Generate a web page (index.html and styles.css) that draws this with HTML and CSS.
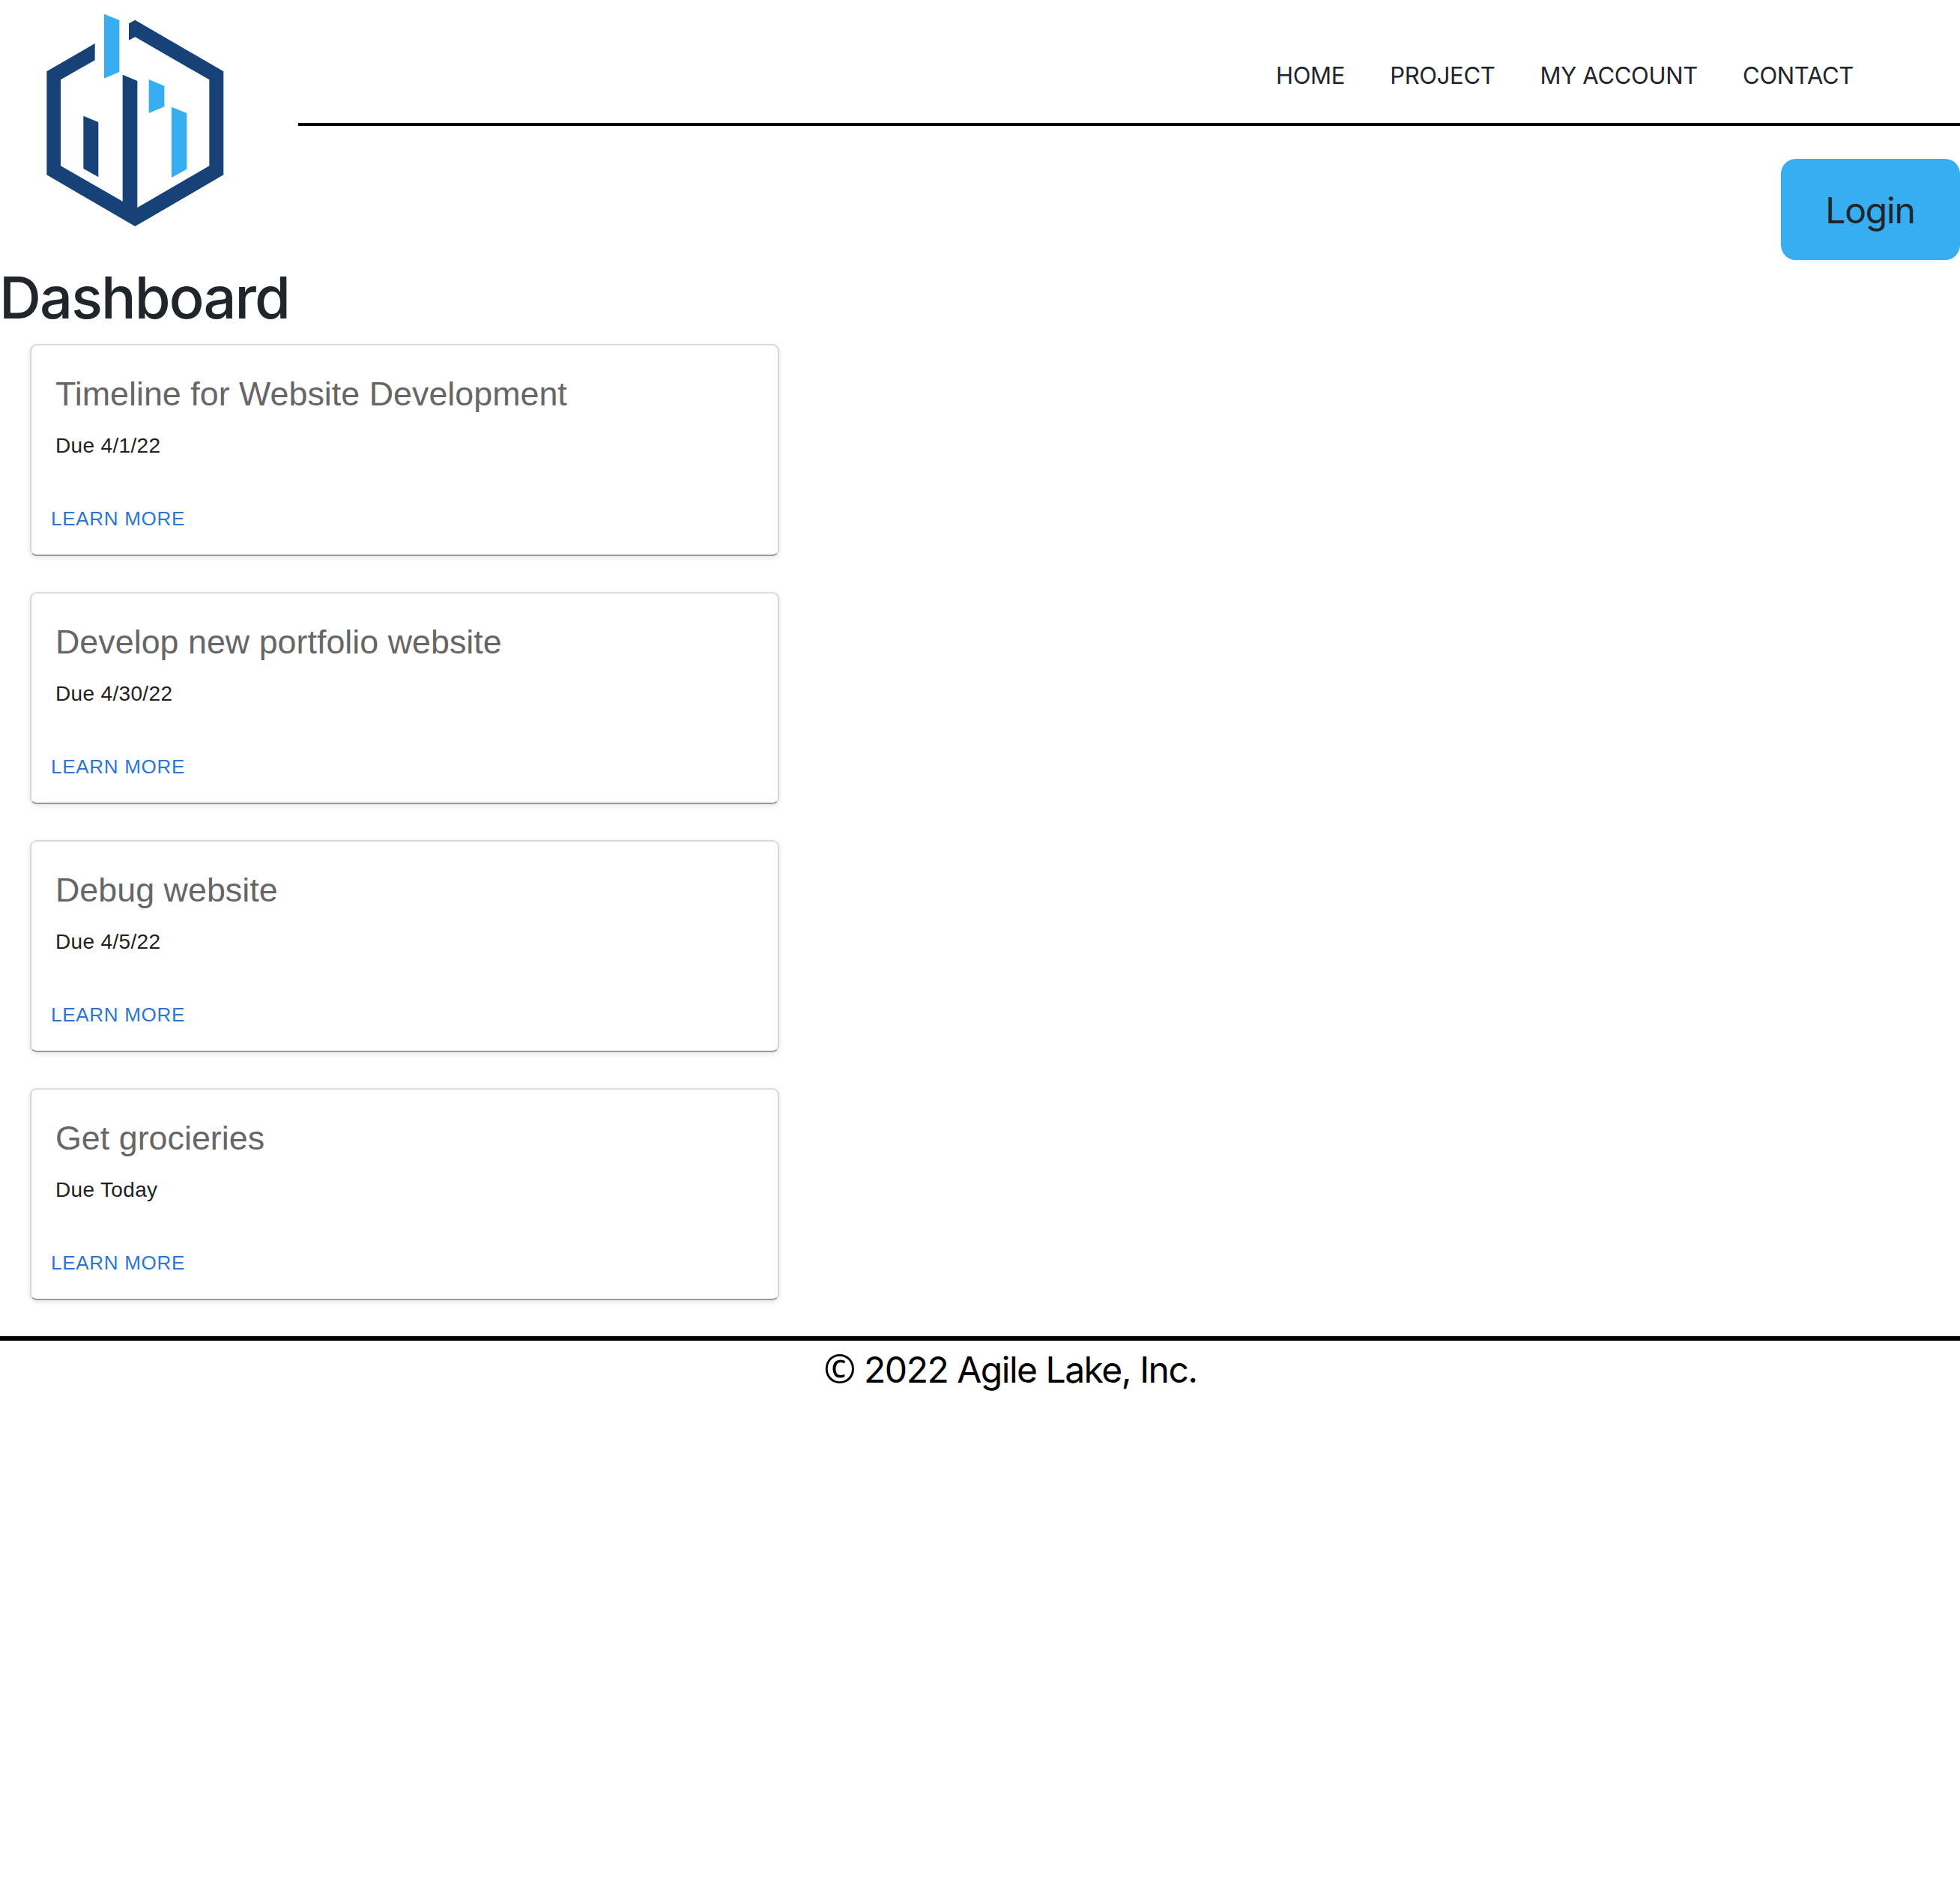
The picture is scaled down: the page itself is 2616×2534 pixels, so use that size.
FILE: index.html
```html
<!DOCTYPE html>
<html lang="en">
<head>
  <meta charset="utf-8">
  <title>Dashboard - Agile Lake</title>
  <link rel="stylesheet" href="styles.css">
</head>
<body>
  <header class="header">
    <a class="logo" aria-label="Agile Lake">
      <svg class="logo-mark" viewBox="0 0 1194 1020">
        <g fill="#164278">
          <path d="M380 174V241L243 319V664L491 806V299L550 324V831L838 664V319L541 148L516 161V94L541 80L895 286V700L541 906L187 700V286Z"/>
          <path d="M334 464L394 489V709L334 675Z"/>
        </g>
        <g fill="#36aef1">
          <path d="M417 56L478 81V288L417 314Z"/>
          <path d="M596 318L658 344V427L596 453Z"/>
          <path d="M687 428L748 453V677L687 711Z"/>
        </g>
      </svg>
    </a>
    <div class="header-main">
      <nav class="nav">
        <a class="nav-link">HOME</a>
        <a class="nav-link">PROJECT</a>
        <a class="nav-link">MY ACCOUNT</a>
        <a class="nav-link">CONTACT</a>
      </nav>
      <button class="login">Login</button>
    </div>
  </header>

  <main>
    <h1 class="page-title">Dashboard</h1>
    <div class="cards">
      <section class="card">
        <h2 class="card-title">Timeline for Website Development</h2>
        <p class="card-due">Due 4/1/22</p>
        <a class="card-link">LEARN MORE</a>
      </section>
      <section class="card">
        <h2 class="card-title">Develop new portfolio website</h2>
        <p class="card-due">Due 4/30/22</p>
        <a class="card-link">LEARN MORE</a>
      </section>
      <section class="card">
        <h2 class="card-title">Debug website</h2>
        <p class="card-due">Due 4/5/22</p>
        <a class="card-link">LEARN MORE</a>
      </section>
      <section class="card">
        <h2 class="card-title">Get grocieries</h2>
        <p class="card-due">Due Today</p>
        <a class="card-link">LEARN MORE</a>
      </section>
    </div>
  </main>

  <footer class="footer"><span class="copyright">©</span> 2022 Agile Lake, Inc.</footer>
</body>
</html>
```
FILE: styles.css
```css
* {
  box-sizing: border-box;
}

body {
  margin: 0;
  background: #fff;
  color: #212529;
  font-family: Inter, sans-serif;
}

.header {
  display: flex;
  height: 347px;
}

.logo {
  flex: 0 0 398px;
}

.logo-mark {
  display: block;
  width: 398px;
  height: 340px;
}

.header-main {
  flex: 1;
  display: flex;
  flex-direction: column;
  align-items: flex-end;
}

.nav {
  display: flex;
  align-items: center;
  justify-content: flex-end;
  gap: 60px;
  width: 100%;
  height: 168px;
  padding: 37px 142px 0 0;
  border-bottom: 4px solid #000;
}

.nav-link {
  font-size: 31px;
  line-height: 48px;
  letter-spacing: -0.3px;
}

.login {
  width: 239px;
  height: 135px;
  margin-top: 44px;
  padding: 2px 1px 0 0;
  border: 0;
  border-radius: 20px;
  background: #36aef1;
  color: #212529;
  font: 48px Inter, sans-serif;
  letter-spacing: -1.2px;
}

.page-title {
  margin: 2px 0 14px -1px;
  font-size: 77.5px;
  font-weight: 500;
  line-height: 96px;
  letter-spacing: -1.9px;
}

.cards {
  display: flex;
  flex-direction: column;
  gap: 48px;
  width: 1000px;
  margin: 0 0 48px 40px;
  font-family: "Liberation Sans", sans-serif;
}

.card {
  height: 283px;
  padding: 32px 32px 0;
  border: 2px solid #d6d6d6;
  border-top-color: #dcdcdc;
  border-bottom-color: #999;
  border-radius: 9px;
  box-shadow: 0 2px 6px rgba(0, 0, 0, 0.12);
}

.card-title {
  margin: 0;
  color: #666;
  font-size: 44.8px;
  font-weight: 400;
  line-height: 64px;
  letter-spacing: 0.02px;
}

.card-due {
  margin: 18px 0 55px;
  color: #212121;
  font-size: 28px;
  line-height: 40px;
  letter-spacing: 0.34px;
}

.card-link {
  display: block;
  margin-left: -6px;
  color: #2a76d2;
  font-size: 26px;
  line-height: 44px;
  letter-spacing: 0.72px;
}

.footer {
  padding-left: 81px;
  border-top: 6px solid #000;
  color: #000;
  font-size: 48px;
  line-height: 77px;
  letter-spacing: -1.5px;
  text-align: center;
}

.copyright {
  font-family: "Noto Sans", sans-serif;
  font-size: 52px;
  line-height: 1;
}
```
